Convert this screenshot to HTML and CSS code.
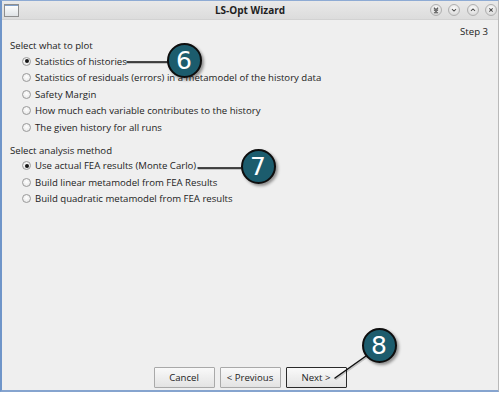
FILE: index.html
```html
<!DOCTYPE html>
<html lang="en">
<head>
  <meta charset="UTF-8">
  <meta name="viewport" content="width=device-width, initial-scale=1.0">
  <title>LS-Opt Wizard</title>
  <link rel="stylesheet" href="styles.css">
</head>
<body>
  <div class="window">
    <div class="titlebar">
      <span class="app-icon"></span>
      <span class="title">LS-Opt Wizard</span>
      <div class="win-buttons">
        <span class="win-btn">
          <svg viewBox="0 0 12 12"><path d="M3.5 3.3 L6 5.5 L8.5 3.3 M3.5 5.5 L6 7.7 L8.5 5.5 M3.5 9.2 H8.5"/></svg>
        </span>
        <span class="win-btn">
          <svg viewBox="0 0 12 12"><path d="M3.6 5 L6 7.3 L8.4 5"/></svg>
        </span>
        <span class="win-btn">
          <svg viewBox="0 0 12 12"><path d="M3.6 7 L6 4.7 L8.4 7"/></svg>
        </span>
        <span class="win-btn">
          <svg viewBox="0 0 12 12"><path d="M4 4 L8 8 M8 4 L4 8"/></svg>
        </span>
      </div>
    </div>

    <div class="content">
      <div class="step">Step 3</div>

      <div class="group-label">Select what to plot</div>
      <ul class="options">
        <li class="option checked"><span class="radio"></span>Statistics of histories</li>
        <li class="option"><span class="radio"></span>Statistics of residuals (errors) in a metamodel of the history data</li>
        <li class="option"><span class="radio"></span>Safety Margin</li>
        <li class="option"><span class="radio"></span>How much each variable contributes to the history</li>
        <li class="option"><span class="radio"></span>The given history for all runs</li>
      </ul>

      <div class="group-label second">Select analysis method</div>
      <ul class="options">
        <li class="option checked"><span class="radio"></span>Use actual FEA results (Monte Carlo)</li>
        <li class="option"><span class="radio"></span>Build linear metamodel from FEA Results</li>
        <li class="option"><span class="radio"></span>Build quadratic metamodel from FEA results</li>
      </ul>

      <div class="buttons">
        <button class="btn">Cancel</button>
        <button class="btn">&lt; Previous</button>
        <button class="btn default">Next &gt;</button>
      </div>
    </div>

    <!-- annotation overlay -->
    <svg class="callout-lines" viewBox="0 0 496 390">
      <g class="shadow">
        <line x1="126" y1="62" x2="167" y2="62"/>
        <line x1="197" y1="168" x2="240" y2="168"/>
        <line x1="334" y1="378" x2="365" y2="356"/>
      </g>
      <g class="stroke">
        <line x1="125" y1="61" x2="166" y2="61"/>
        <line x1="196" y1="167" x2="239" y2="167"/>
        <line x1="333" y1="377" x2="364" y2="355"/>
      </g>
    </svg>
    <div class="callout c6">6</div>
    <div class="callout c7">7</div>
    <div class="callout c8">8</div>
  </div>
</body>
</html>
```

FILE: styles.css
```css
body {
  margin: 0;
  background: #ffffff;
  font-family: "Open Sans", "Liberation Sans", sans-serif;
  font-size: 9.6px;
  color: #1c1c1c;
}
.window {
  position: relative;
  width: 499px;
  height: 392px;
  box-sizing: border-box;
  border-left: 2px solid #6f95c9;
  border-top: 1px solid #8eabd4;
  border-right: 1px solid #b9b9b9;
  border-bottom: 2px solid #86a4cf;
  background: #efefef;
  display: flex;
  flex-direction: column;
}
.titlebar {
  height: 18px;
  flex: none;
  display: grid;
  grid-template-columns: 1fr auto 1fr;
  align-items: center;
  background: linear-gradient(#e9e9e9, #dcdcdc);
  border-bottom: 1px solid #d2d2d2;
}
.app-icon {
  width: 13px;
  height: 11px;
  margin-left: 2px;
  border: 1px solid #8e8e8e;
  background: linear-gradient(#ffffff, #dfe3e6);
  box-shadow: inset 0 1px 0 #7f9fc9;
}
.title {
  font-weight: bold;
  font-size: 10px;
  color: #1e1e1e;
}
.win-buttons {
  justify-self: end;
  display: flex;
  gap: 6.5px;
  margin-right: 1px;
}
.win-btn {
  width: 12px;
  height: 12px;
  border-radius: 50%;
  box-sizing: border-box;
  border: 1px solid #b0b0b0;
  background: radial-gradient(circle at 50% 35%, #fcfcfc, #d0d0d0);
  display: flex;
}
.win-btn svg {
  width: 100%;
  height: 100%;
  fill: none;
  stroke: #505050;
  stroke-width: 1.3;
}
.content {
  flex: 1;
  display: flex;
  flex-direction: column;
  padding: 5px 8px 2px 8px;
}
.step {
  text-align: right;
  line-height: 14px;
  padding-right: 2px;
}
.group-label {
  line-height: 14px;
}
.group-label.second {
  margin-top: 8px;
}
.options {
  list-style: none;
  margin: 0;
  padding: 0;
}
.option {
  height: 16.5px;
  display: flex;
  align-items: center;
  padding-left: 12px;
}
.radio {
  width: 9px;
  height: 9px;
  box-sizing: border-box;
  margin-right: 4px;
  border-radius: 50%;
  border: 1px solid #9a9a9a;
  background: radial-gradient(circle at 50% 40%, #ffffff, #e2e2e2);
  display: flex;
  align-items: center;
  justify-content: center;
}
.option.checked .radio::after {
  content: "";
  width: 4px;
  height: 4px;
  border-radius: 50%;
  background: #161616;
}
.buttons {
  margin-top: auto;
  display: flex;
  justify-content: center;
  gap: 5px;
}
.btn {
  width: 61px;
  height: 21px;
  font-family: inherit;
  font-size: 9.6px;
  color: #222;
  border: 1px solid #a9a9a9;
  border-radius: 1px;
  background: linear-gradient(#f9f9f9, #e3e3e3);
  padding: 0;
}
.btn.default {
  border-color: #2a2a2a;
}
.callout-lines {
  position: absolute;
  left: 0;
  top: 0;
  width: 496px;
  height: 390px;
  pointer-events: none;
}
.callout-lines line {
  stroke-linecap: round;
}
.callout-lines .shadow line {
  stroke: rgba(0, 0, 0, 0.18);
  stroke-width: 2;
}
.callout-lines .stroke line {
  stroke: #111;
  stroke-width: 1.5;
}
.callout {
  position: absolute;
  width: 35px;
  height: 35px;
  box-sizing: border-box;
  border-radius: 50%;
  border: 2px solid #0e0e0e;
  background: #1c5c6d;
  box-shadow: 2px 2px 3px rgba(0, 0, 0, 0.4);
  color: #ffffff;
  font-family: "DejaVu Sans", sans-serif;
  font-size: 25px;
  display: flex;
  align-items: center;
  justify-content: center;
}
.c6 { left: 164.5px; top: 41.5px; }
.c7 { left: 238.5px; top: 147.5px; }
.c8 { left: 359.5px; top: 326.5px; }
```
